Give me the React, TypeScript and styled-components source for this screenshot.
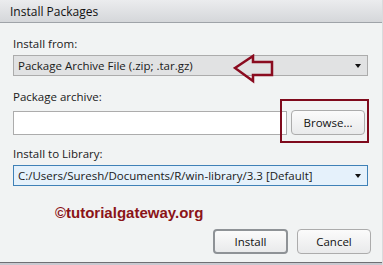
import React from 'react';
import styled, { createGlobalStyle } from 'styled-components';

const GlobalStyle = createGlobalStyle`
  html, body {
    margin: 0;
    padding: 0;
    background: #f1f3f3;
  }
  * {
    box-sizing: border-box;
  }
`;

const Window = styled.div`
  width: 383px;
  height: 265px;
  display: flex;
  flex-direction: column;
  overflow: hidden;
  position: relative;
  background: #f1f3f3;
  font-family: "Open Sans", "Noto Sans", sans-serif;
  font-size: 11.5px;
  color: #1a1a1a;
  border-right: 1px solid #d9dbdd;
`;

const TitleBar = styled.div`
  height: 23px;
  flex-shrink: 0;
  display: flex;
  align-items: center;
  padding-left: 10px;
  background: linear-gradient(#ebecee, #d5d7da);
  border-bottom: 1px solid #9fa3a8;
  font-size: 12px;
  color: #111;
`;

const Body = styled.div`
  flex: 1;
  padding: 0 14px 0 13px;
  display: flex;
  flex-direction: column;
  position: relative;
`;

const Label = styled.div<{ $top: number }>`
  margin-top: ${p => p.$top}px;
  height: 16px;
  line-height: 16px;
`;

const Select = styled.div<{ $focused?: boolean }>`
  margin-top: 3px;
  height: 21px;
  display: flex;
  align-items: center;
  justify-content: space-between;
  padding: 0 6px 0 4px;
  border: 1px solid ${p => (p.$focused ? '#3f81b7' : '#acacac')};
  background: ${p => (p.$focused ? '#e5f1fb' : '#e1e2e3')};
  white-space: nowrap;
  position: relative;
`;

const Caret = styled.span`
  width: 0;
  height: 0;
  border-left: 3.5px solid transparent;
  border-right: 3.5px solid transparent;
  border-top: 4px solid #111;
`;

const FileRow = styled.div`
  margin-top: 5px;
  display: flex;
  align-items: center;
  position: relative;
  height: 25px;
`;

const TextInput = styled.div`
  width: 274px;
  height: 24px;
  background: #fff;
  border: 1px solid #acacac;
`;

const Button = styled.div<{ $default?: boolean; $width: number }>`
  width: ${p => p.$width}px;
  height: 25px;
  display: flex;
  align-items: center;
  justify-content: center;
  border-radius: 4px;
  border: ${p => (p.$default ? '2px solid #8e9296' : '1px solid #acacac')};
  background: linear-gradient(#fbfbfb, #e9eaeb);
  color: #111;
`;

const BrowseButton = styled(Button)`
  margin-left: 4px;
`;

const Highlight = styled.div`
  position: absolute;
  left: 267px;
  top: -11px;
  width: 89px;
  height: 44px;
  border: 2.5px solid #7f0a1c;
`;

const ArrowMark = styled.svg`
  position: absolute;
  left: 219px;
  top: -2px;
`;

const Watermark = styled.div`
  margin-top: 17px;
  padding-left: 42px;
  font-family: "Liberation Sans", Arial, sans-serif;
  font-weight: bold;
  font-size: 15px;
  line-height: 20px;
  color: #8b1418;
`;

const ButtonRow = styled.div`
  margin-top: 6px;
  margin-right: -3px;
  display: flex;
  justify-content: flex-end;
  gap: 9px;
`;

const BottomStrip = styled.div`
  height: 3px;
  flex-shrink: 0;
  border-top: 1px solid #6f6f73;
  background: #c9c9d0;
`;

export default function App() {
  return (
    <>
      <GlobalStyle />
      <Window>
        <TitleBar>Install Packages</TitleBar>
        <Body>
          <Label $top={13}>Install from:</Label>
          <Select>
            <span>Package Archive File (.zip; .tar.gz)</span>
            <Caret />
            <ArrowMark width="42" height="30" viewBox="0 0 42 30">
              <polygon
                points="2,14 20,2 20,8 39,8 39,21 20,21 20,27"
                fill="none"
                stroke="#8a0b1f"
                strokeWidth="2.5"
              />
            </ArrowMark>
          </Select>
          <Label $top={13}>Package archive:</Label>
          <FileRow>
            <TextInput />
            <BrowseButton $width={74}>Browse...</BrowseButton>
            <Highlight />
          </FileRow>
          <Label $top={11}>Install to Library:</Label>
          <Select $focused>
            <span>C:/Users/Suresh/Documents/R/win-library/3.3 [Default]</span>
            <Caret />
          </Select>
          <Watermark>©tutorialgateway.org</Watermark>
          <ButtonRow>
            <Button $default $width={75}>Install</Button>
            <Button $width={74}>Cancel</Button>
          </ButtonRow>
        </Body>
        <BottomStrip />
      </Window>
    </>
  );
}
